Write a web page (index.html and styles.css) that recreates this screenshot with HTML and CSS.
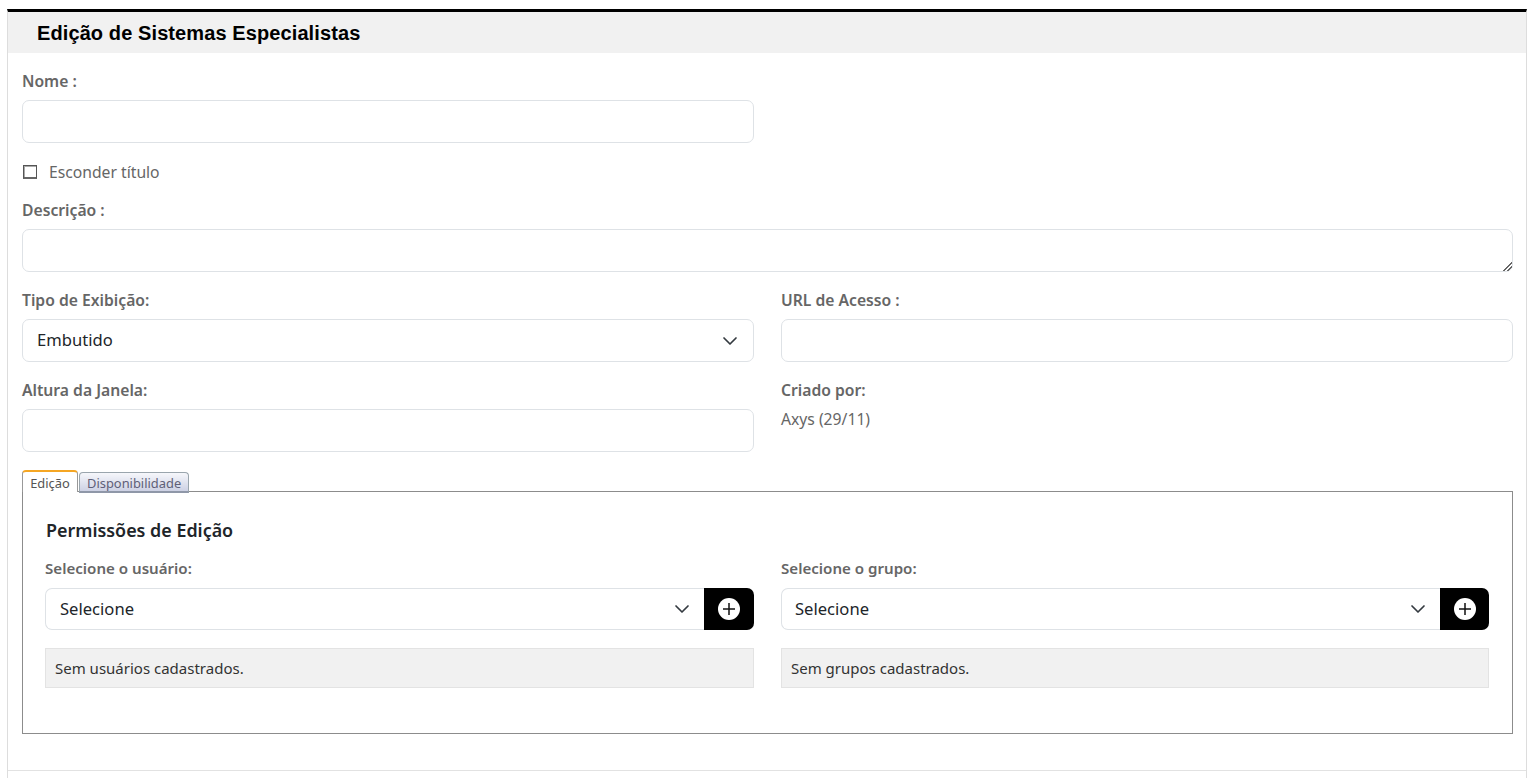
FILE: index.html
```html
<!DOCTYPE html>
<html lang="pt-BR">
<head>
<meta charset="utf-8">
<title>Edição de Sistemas Especialistas</title>
<link rel="stylesheet" href="styles.css">
</head>
<body>
<main class="panel">
  <h1 class="panel-title">Edição de Sistemas Especialistas</h1>
  <form class="panel-body">
    <div class="grid">
      <div class="field">
        <label class="label">Nome :</label>
        <input class="control" type="text">
      </div>
    </div>
    <label class="check">
      <input class="check-box" type="checkbox">
      <span>Esconder título</span>
    </label>
    <div class="field field-desc">
      <label class="label">Descrição :</label>
      <textarea class="control area"></textarea>
    </div>
    <div class="grid grid-row">
      <div class="field">
        <label class="label">Tipo de Exibição:</label>
        <div class="select">
          <span>Embutido</span>
          <svg class="chevron" viewBox="0 0 16 16"><path d="M2 5l6 6 6-6" fill="none" stroke="#343a40" stroke-width="1.7" stroke-linecap="round" stroke-linejoin="round"/></svg>
        </div>
      </div>
      <div class="field">
        <label class="label">URL de Acesso :</label>
        <input class="control" type="text">
      </div>
    </div>
    <div class="grid grid-row">
      <div class="field">
        <label class="label">Altura da Janela:</label>
        <input class="control" type="text">
      </div>
      <div class="field">
        <label class="label">Criado por:</label>
        <p class="static">Axys (29/11)</p>
      </div>
    </div>
    <div class="tabs">
      <a class="tab tab-active">Edição</a>
      <a class="tab">Disponibilidade</a>
    </div>
    <section class="tab-box">
      <h2 class="box-title">Permissões de Edição</h2>
      <div class="box-grid">
        <div class="col">
          <label class="label label-sm">Selecione o usuário:</label>
          <div class="picker">
            <div class="select select-joined">
              <span>Selecione</span>
              <svg class="chevron" viewBox="0 0 16 16"><path d="M2 5l6 6 6-6" fill="none" stroke="#343a40" stroke-width="1.7" stroke-linecap="round" stroke-linejoin="round"/></svg>
            </div>
            <button class="add" type="button"><svg viewBox="0 0 22 22" class="add-icon"><circle cx="11" cy="11" r="11" fill="#fff"/><path d="M11 5v12M5 11h12" stroke="#111" stroke-width="1.5" fill="none"/></svg></button>
          </div>
          <div class="empty">Sem usuários cadastrados.</div>
        </div>
        <div class="col col-right">
          <label class="label label-sm">Selecione o grupo:</label>
          <div class="picker">
            <div class="select select-joined">
              <span>Selecione</span>
              <svg class="chevron" viewBox="0 0 16 16"><path d="M2 5l6 6 6-6" fill="none" stroke="#343a40" stroke-width="1.7" stroke-linecap="round" stroke-linejoin="round"/></svg>
            </div>
            <button class="add" type="button"><svg viewBox="0 0 22 22" class="add-icon"><circle cx="11" cy="11" r="11" fill="#fff"/><path d="M11 5v12M5 11h12" stroke="#111" stroke-width="1.5" fill="none"/></svg></button>
          </div>
          <div class="empty">Sem grupos cadastrados.</div>
        </div>
      </div>
    </section>
  </form>
</main>
</body>
</html>
```
FILE: styles.css
```css
* { box-sizing: border-box; }
html, body { margin: 0; padding: 0; height: 100%; overflow: hidden; background: #fff; }
body { font-family: "Noto Sans", sans-serif; color: #212529; }
.panel {
  margin: 9px 7px 0;
  width: 1520px;
  height: 769px;
  border-top: 3px solid #000;
  border-left: 1px solid #ddd;
  border-right: 1px solid #ddd;
}
.panel-title {
  margin: 0;
  height: 41px;
  padding: 0 29px;
  background: #f1f1f1;
  font: bold 20px/42px "Liberation Sans", sans-serif;
  letter-spacing: 0.1px;
  color: #000;
}
.panel-body {
  height: 718px;
  padding: 17px 13px 0 14px;
  border-bottom: 1px solid #e2e2e2;
}
.grid { display: grid; grid-template-columns: 732px 732px; column-gap: 27px; }
.grid-row { margin-top: 17px; }
.label {
  display: block;
  height: 24px;
  margin-bottom: 6px;
  font-size: 15.7px;
  line-height: 22px;
  font-weight: 600;
  color: #666;
}
.control {
  display: block;
  width: 100%;
  height: 43px;
  border: 1px solid #dee2e6;
  border-radius: 7px;
  background: #fff;
}
.area { resize: vertical; width: 1491px; margin: 0; }
.area::-webkit-resizer {
  background: linear-gradient(135deg, transparent 68%, #666 68% 74%, transparent 74% 82%, #666 82% 88%, transparent 88%);
}
.check {
  display: flex;
  align-items: center;
  gap: 12px;
  height: 24px;
  margin-top: 17px;
  font-size: 15.7px;
  color: #666;
}
.check-box {
  appearance: none;
  width: 14px;
  height: 14px;
  margin: 0 0 0 1px;
  border: 1px solid #555;
  border-bottom: 2px solid #666;
  box-shadow: inset 1px 1px 0 #aaa;
  background: #fff;
}
.field-desc { margin-top: 15px; width: 1491px; }
.select {
  display: flex;
  align-items: center;
  justify-content: space-between;
  height: 43px;
  padding: 0 15px 0 14px;
  border: 1px solid #dee2e6;
  border-radius: 7px;
  background: #fff;
  font-size: 16.6px;
  color: #212529;
}
.select span { margin-bottom: 2px; }
.chevron { width: 16px; height: 16px; flex: none; }
.static { margin: -2px 0 0; font-size: 15.7px; line-height: 24px; color: #666; }
.tabs {
  display: flex;
  align-items: flex-end;
  gap: 1px;
  height: 22px;
  margin-top: 18px;
  margin-bottom: -1px;
  position: relative;
  z-index: 1;
}
.tab {
  display: block;
  height: 21px;
  margin-bottom: -1px;
  padding: 0 7px;
  border: 1px solid #9aa5ad;
  border-bottom: 2px solid #8f97a8;
  border-radius: 4px 4px 0 0;
  background: linear-gradient(#f6f7fb, #cdd1e4);
  font-size: 12.9px;
  line-height: 20px;
  color: #5f5f78;
}
.tab-active {
  width: 56px;
  height: 22px;
  margin-bottom: 0;
  padding: 0;
  text-align: center;
  border: 1px solid #999;
  border-top: 2px solid #f5a623;
  border-bottom: 0;
  background: #fff;
  line-height: 22px;
  color: #555;
}
.tab-box {
  height: 243px;
  width: 1491px;
  padding: 25px 23px 0 22px;
  border: 1px solid #8c8c8c;
}
.box-title { margin: 0; padding-left: 1px; height: 28px; font-size: 17.9px; line-height: 26px; font-weight: 600; color: #212529; }
.box-grid { display: grid; grid-template-columns: 709px 708px; column-gap: 27px; margin-top: 13px; }
.label-sm { font-size: 15.1px; line-height: 20px; margin-bottom: 6px; }
.picker { display: flex; height: 42px; }
.select-joined { flex: 1; height: 42px; border-radius: 7px 0 0 7px; border-right: 0; padding-right: 14px; }
.col-right .select-joined { padding-left: 13px; }
.col-right .add { width: 49px; }
.add {
  width: 50px;
  height: 42px;
  flex: none;
  padding: 0;
  border: 0;
  border-radius: 0 7px 7px 0;
  background: #000;
  display: flex;
  align-items: center;
  justify-content: center;
}
.add-icon { width: 22px; height: 22px; display: block; }
.empty {
  height: 40px;
  margin-top: 18px;
  padding: 0 9px;
  background: #f1f1f1;
  border: 1px solid #e3e3e3;
  font-size: 15px;
  line-height: 38px;
  color: #333;
}
```
